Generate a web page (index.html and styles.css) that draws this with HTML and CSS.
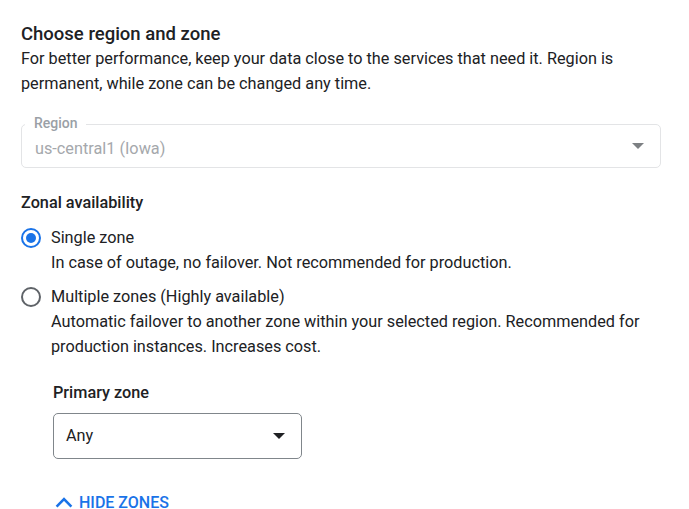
FILE: index.html
```html
<!DOCTYPE html>
<html lang="en">
<head>
<meta charset="utf-8">
<title>Choose region and zone</title>
<link rel="stylesheet" href="styles.css">
</head>
<body>
<div class="page">
  <h2 class="title">Choose region and zone</h2>
  <p class="intro">For better performance, keep your data close to the services that need it. Region is permanent, while zone can be changed any time.</p>

  <div class="field field-disabled">
    <span class="field-label">Region</span>
    <span class="field-value">us-central1 (Iowa)</span>
    <span class="field-arrow arrow-gray"></span>
  </div>

  <h3 class="section-title">Zonal availability</h3>
  <div class="radio-group">
    <div class="radio-option">
      <div class="radio-row">
        <span class="radio radio-checked"></span>
        <span class="radio-label">Single zone</span>
      </div>
      <p class="radio-desc">In case of outage, no failover. Not recommended for production.</p>
    </div>
    <div class="radio-option option-second">
      <div class="radio-row">
        <span class="radio"></span>
        <span class="radio-label">Multiple zones (Highly available)</span>
      </div>
      <p class="radio-desc">Automatic failover to another zone within your selected region. Recommended for production instances. Increases cost.</p>
    </div>
  </div>

  <div class="zone-block">
    <h3 class="zone-title">Primary zone</h3>
    <div class="select">
      <span class="select-value">Any</span>
      <span class="field-arrow arrow-dark"></span>
    </div>
    <div class="hide-zones">
      <svg class="chevron" width="18" height="11" viewBox="0 0 18 11" aria-hidden="true">
        <polyline points="1.6,9.6 9,2.2 16.4,9.6" fill="none" stroke="#1a73e8" stroke-width="2.6"/>
      </svg>
      <span>HIDE ZONES</span>
    </div>
  </div>
</div>
</body>
</html>
```

FILE: styles.css
```css
* { box-sizing: border-box; }
html, body { margin: 0; padding: 0; background: #ffffff; }
body {
  font-family: Roboto, "Noto Sans", Arial, sans-serif;
  color: #202124;
  overflow: hidden;
}
.page {
  width: 689px;
  height: 509px;
  padding: 22px 28px 0 21px;
}
.title {
  margin: 0;
  font-size: 18.5px;
  line-height: 24px;
  font-weight: 500;
  color: #202124;
}
.intro {
  margin: 0;
  font-size: 16.25px;
  line-height: 25px;
  color: #202124;
}
.field {
  position: relative;
  margin-top: 28px;
  height: 44px;
  border: 1px solid #e3e4e6;
  border-radius: 5px;
  padding: 14px 13px 0;
}
.field-label {
  position: absolute;
  left: 3px;
  top: -10px;
  padding: 0 8px 0 9px;
  background: #ffffff;
  font-size: 14px;
  line-height: 16px;
  font-weight: 500;
  color: #9aa0a6;
}
.field-value {
  display: block;
  font-size: 16.25px;
  line-height: 20px;
  color: #a5a8ac;
}
.field-arrow {
  position: absolute;
  width: 0;
  height: 0;
  border-left: 6px solid transparent;
  border-right: 6px solid transparent;
  border-top: 6px solid #7a7d80;
}
.arrow-gray {
  right: 16px;
  top: 18px;
  border-top-color: #7d8083;
}
.section-title {
  margin: 22px 0 0;
  font-size: 16.25px;
  line-height: 25px;
  font-weight: 500;
  color: #202124;
}
.radio-group {
  margin-top: 10px;
  display: flex;
  flex-direction: column;
  gap: 9px;
}
.radio-row {
  display: flex;
  align-items: center;
  gap: 10px;
}
.radio {
  width: 20px;
  height: 20px;
  border: 2px solid #5f6368;
  border-radius: 50%;
  display: flex;
  align-items: center;
  justify-content: center;
  flex: none;
}
.radio-checked { border-color: #1a73e8; }
.radio-checked::after {
  content: "";
  width: 10px;
  height: 10px;
  border-radius: 50%;
  background: #1a73e8;
}
.radio-label {
  font-size: 16.25px;
  line-height: 25px;
  color: #202124;
}
.radio-desc {
  margin: 0 0 0 30px;
  font-size: 16.25px;
  line-height: 25px;
  color: #202124;
}
.zone-block {
  margin-top: 21px;
  padding-left: 32px;
}
.zone-title {
  margin: 0;
  font-size: 16.25px;
  line-height: 25px;
  font-weight: 500;
  color: #202124;
}
.select {
  position: relative;
  margin-top: 8px;
  width: 249px;
  height: 46px;
  border: 1px solid #80868b;
  border-radius: 5px;
  padding: 0 12px;
  display: flex;
  align-items: center;
}
.select-value {
  font-size: 16.25px;
  line-height: 20px;
  color: #202124;
}
.arrow-dark {
  right: 16px;
  top: 19px;
  border-top-color: #202124;
}
.hide-zones {
  margin-top: 31px;
  display: flex;
  align-items: center;
  gap: 6px;
  padding-left: 2px;
  font-size: 16px;
  line-height: 25px;
  font-weight: 500;
  color: #1a73e8;
}
.chevron { flex: none; }
```
